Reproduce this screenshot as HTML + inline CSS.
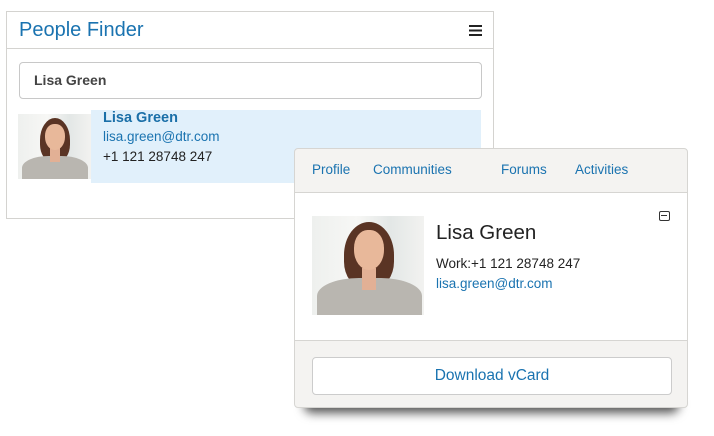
<!DOCTYPE html>
<html><head><style>
body{margin:0;width:714px;height:436px;background:#fff;position:relative;overflow:hidden;font-family:"Liberation Sans",Arial,sans-serif}
.a{position:absolute}
.photo{position:absolute;overflow:hidden;background:linear-gradient(90deg,#eef0ee,#f7f7f5 40%,#e3e7e6 70%,#f2f2f0)}
.photo .hair{position:absolute;background:#5a3424;border-radius:50% 50% 40% 40%}
.photo .face{position:absolute;background:#e8b89a;border-radius:45% 45% 50% 50%}
.photo .body{position:absolute;background:#b9b6b0;border-radius:40% 40% 0 0}
.photo .neck{position:absolute;background:#e2b095}
</style></head><body>
<div class="a" style="left:6px;top:11px;width:486px;height:206px;border:1px solid #d4d3d0"></div>
<div class="a" style="left:7px;top:48px;width:486px;height:1px;background:#d4d3d0"></div>
<div class="a" style="left:19px;top:19px;font-size:20px;color:#1a73b0">People Finder</div>
<div class="a" style="left:469px;top:25px;width:13px;height:2px;background:#222;box-shadow:0 4.5px 0 #222,0 9px 0 #222"></div>
<div class="a" style="left:19px;top:62px;width:461px;height:35px;border:1px solid #c8c8c8;border-radius:4px"></div>
<div class="a" style="left:34px;top:72px;font-size:14px;font-weight:bold;color:#444">Lisa Green</div>
<div class="a" style="left:91px;top:110px;width:390px;height:73px;background:#e1f0fb"></div>
<div class="photo" style="left:18px;top:114px;width:73px;height:65px">
  <div class="hair" style="left:22px;top:4px;width:30px;height:44px"></div>
  <div class="body" style="left:4px;top:42px;width:66px;height:30px"></div>
  <div class="neck" style="left:32px;top:34px;width:10px;height:14px"></div>
  <div class="face" style="left:27px;top:10px;width:20px;height:26px"></div>
</div>
<div class="a" style="left:103px;top:110px;font-size:14.5px;font-weight:bold;color:#1a6fa8">Lisa Green</div>
<div class="a" style="left:103px;top:129px;font-size:13.5px;color:#1a73b0">lisa.green@dtr.com</div>
<div class="a" style="left:103px;top:149px;font-size:13.5px;color:#222">+1 121 28748 247</div>

<div class="a" style="left:304px;top:395px;width:375px;height:18px;background:#555;filter:blur(5px);border-radius:8px"></div>
<div class="a" style="left:294px;top:148px;width:392px;height:258px;border:1px solid #d6d5d2;border-radius:4px;background:#f4f3f1;overflow:hidden">
  <div class="a" style="left:0;top:43px;width:392px;height:147px;background:#fff;border-top:1px solid #d6d5d2;border-bottom:1px solid #d6d5d2"></div>
</div>
<div class="a" style="left:312px;top:162px;font-size:13.5px;color:#1a73b0">Profile</div>
<div class="a" style="left:373px;top:162px;font-size:13.5px;color:#1a73b0">Communities</div>
<div class="a" style="left:501px;top:162px;font-size:13.5px;color:#1a73b0">Forums</div>
<div class="a" style="left:575px;top:162px;font-size:13.5px;color:#1a73b0">Activities</div>
<div class="a" style="left:659px;top:211px;width:9px;height:8px;border:1.3px solid #333;border-radius:2px"></div>
<div class="a" style="left:661px;top:215px;width:6px;height:1.3px;background:#333"></div>
<div class="photo" style="left:312px;top:216px;width:112px;height:99px">
  <div class="hair" style="left:32px;top:6px;width:50px;height:66px"></div>
  <div class="body" style="left:5px;top:62px;width:105px;height:45px"></div>
  <div class="neck" style="left:50px;top:52px;width:14px;height:22px"></div>
  <div class="face" style="left:42px;top:14px;width:30px;height:40px"></div>
</div>
<div class="a" style="left:436px;top:221px;font-size:20.5px;color:#222">Lisa Green</div>
<div class="a" style="left:436px;top:256px;font-size:13.5px;color:#222">Work:+1 121 28748 247</div>
<div class="a" style="left:436px;top:276px;font-size:13.5px;color:#1a73b0">lisa.green@dtr.com</div>
<div class="a" style="left:312px;top:357px;width:358px;height:36px;border:1px solid #ccc;border-radius:4px;background:#fff"></div>
<div class="a" style="left:312px;top:367px;width:360px;text-align:center;font-size:15.5px;color:#1a73b0">Download vCard</div>
</body></html>
